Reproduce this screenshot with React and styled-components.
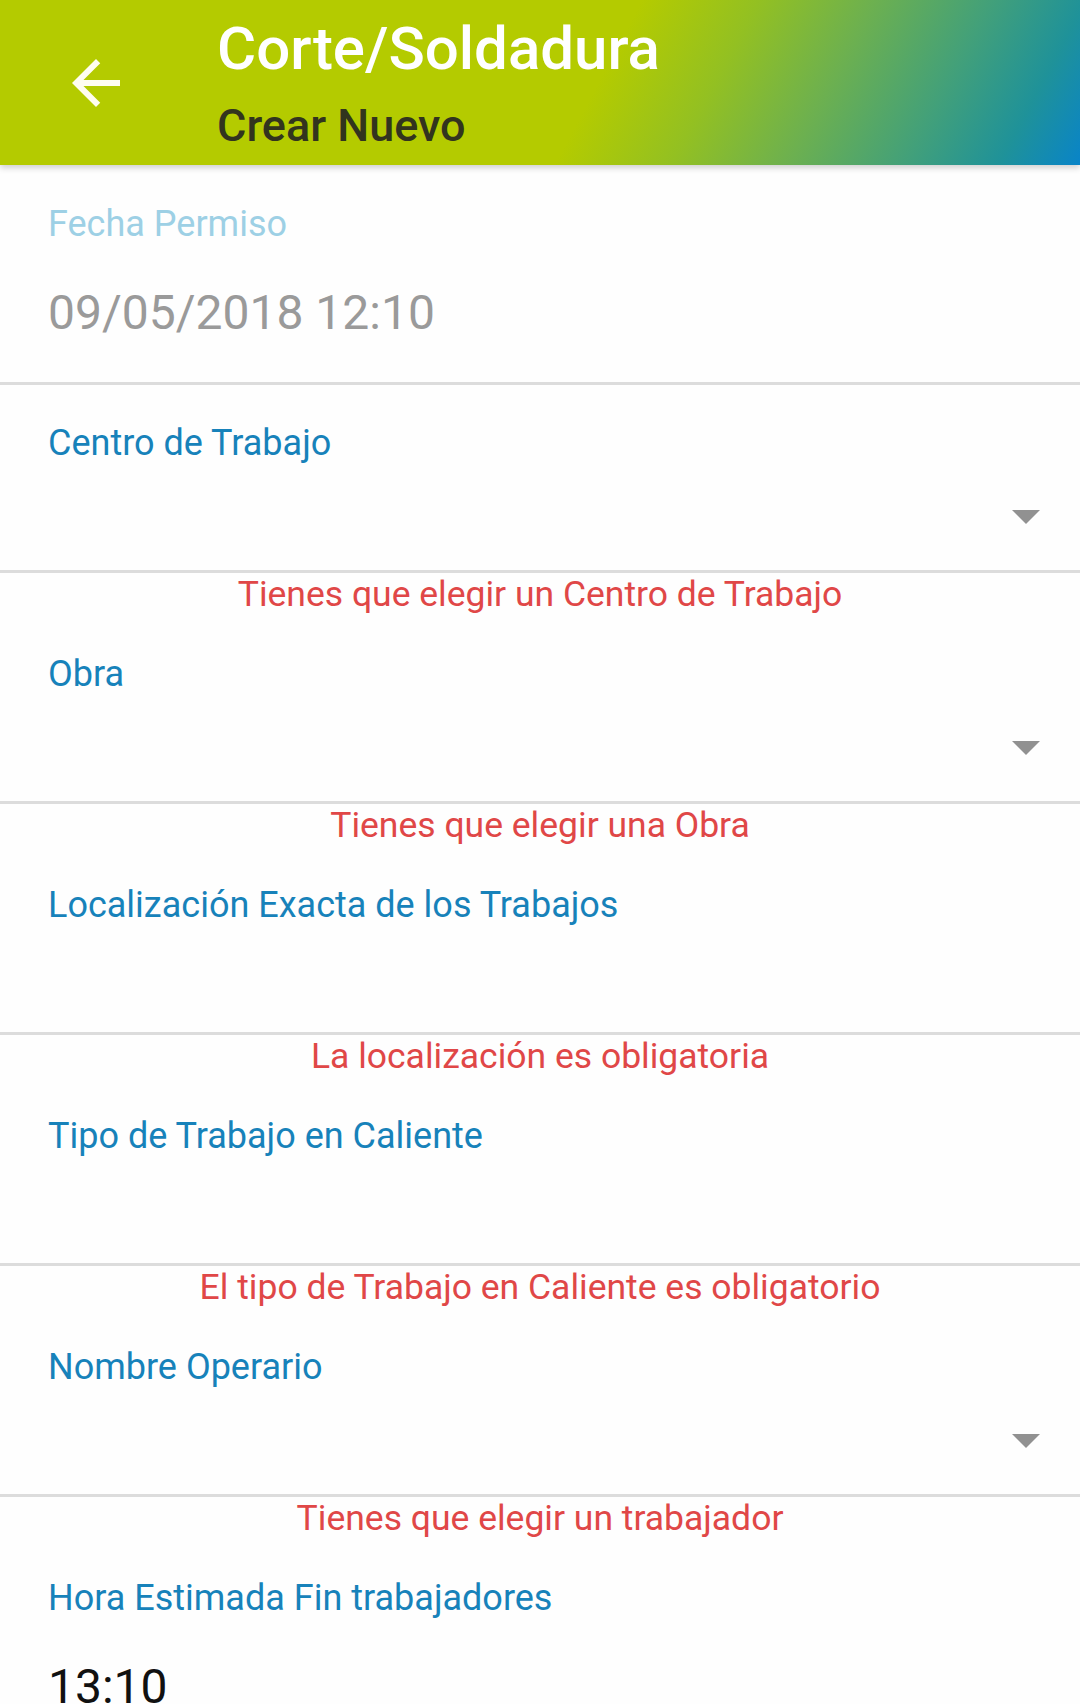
import React from "react";
import styled, { createGlobalStyle } from "styled-components";

const GlobalStyle = createGlobalStyle`
  html, body {
    margin: 0;
    padding: 0;
    background: #fefefe;
  }
  body {
    font-family: Roboto, "Liberation Sans", sans-serif;
  }
`;

const Page = styled.div`
  width: 1080px;
  min-height: 1704px;
  overflow: hidden;
  background: #fefefe;
`;

const Header = styled.header`
  position: relative;
  z-index: 2;
  height: 165px;
  display: flex;
  align-items: flex-start;
  background: linear-gradient(
    118deg,
    #b4cb00 0%,
    #b4cb00 55%,
    #93c022 65%,
    #6cb050 75%,
    #42a07a 85%,
    #1f9299 93%,
    #0984c8 100%
  );
  box-shadow: 0 3px 6px rgba(0, 0, 0, 0.18);
`;

const BackButton = styled.button`
  width: 72px;
  height: 72px;
  margin: 47px 0 0 60px;
  padding: 0;
  border: none;
  background: transparent;
  display: flex;
  align-items: center;
  justify-content: center;
  cursor: pointer;
`;

const Titles = styled.div`
  display: flex;
  flex-direction: column;
  margin-left: 85px;
  padding-top: 19px;
`;

const Title = styled.h1`
  margin: 0 0 24px;
  font-size: 60px;
  line-height: 60px;
  font-weight: 500;
  color: #ffffff;
`;

const Subtitle = styled.h2`
  margin: 0;
  font-size: 45px;
  line-height: 45px;
  font-weight: 500;
  color: #32341e;
`;

const Form = styled.main`
  display: flex;
  flex-direction: column;
`;

const Field = styled.section`
  display: flex;
  flex-direction: column;
  padding-top: ${(p) => (p.$first ? "39px" : "38px")};
`;

const Label = styled.label`
  padding-left: 48px;
  font-size: 36px;
  line-height: 41px;
  color: ${(p) => (p.$muted ? "#9dd0e5" : "#1782ba")};
`;

const Value = styled.div`
  margin-top: 40px;
  padding-left: 48px;
  padding-bottom: 41px;
  font-size: 48px;
  line-height: 56px;
  color: ${(p) => (p.$dim ? "#9a9a9a" : "#111111")};
`;

const SpinnerRow = styled.div`
  height: 106px;
  display: flex;
  align-items: center;
  justify-content: flex-end;
  padding-right: 40px;
`;

const Caret = styled.span`
  width: 0;
  height: 0;
  border-left: 14.5px solid transparent;
  border-right: 14.5px solid transparent;
  border-top: 14px solid #919191;
`;

const Divider = styled.hr`
  margin: 0;
  border: none;
  height: 3px;
  background: #dcdcdc;
`;

const ErrorText = styled.p`
  margin: 0;
  height: 43px;
  font-size: 35.5px;
  line-height: 43px;
  text-align: center;
  color: #e04747;
`;

function ArrowBack() {
  return (
    <svg width="72" height="72" viewBox="0 0 24 24" fill="#fffdf0">
      <path d="M20 11H7.83l5.59-5.59L12 4l-8 8 8 8 1.41-1.41L7.83 13H20v-2z" />
    </svg>
  );
}

const fields = [
  { label: "Centro de Trabajo", dropdown: true, error: "Tienes que elegir un Centro de Trabajo" },
  { label: "Obra", dropdown: true, error: "Tienes que elegir una Obra" },
  { label: "Localización Exacta de los Trabajos", error: "La localización es obligatoria" },
  { label: "Tipo de Trabajo en Caliente", error: "El tipo de Trabajo en Caliente es obligatorio" },
  { label: "Nombre Operario", dropdown: true, error: "Tienes que elegir un trabajador" },
];

export default function App() {
  return (
    <Page>
      <GlobalStyle />
      <Header>
        <BackButton aria-label="Volver">
          <ArrowBack />
        </BackButton>
        <Titles>
          <Title>Corte/Soldadura</Title>
          <Subtitle>Crear Nuevo</Subtitle>
        </Titles>
      </Header>

      <Form>
        <Field $first>
          <Label $muted>Fecha Permiso</Label>
          <Value $dim>09/05/2018 12:10</Value>
        </Field>
        <Divider />

        {fields.map((f) => (
          <React.Fragment key={f.label}>
            <Field>
              <Label>{f.label}</Label>
              <SpinnerRow>{f.dropdown && <Caret />}</SpinnerRow>
            </Field>
            <Divider />
            <ErrorText>{f.error}</ErrorText>
          </React.Fragment>
        ))}

        <Field>
          <Label>Hora Estimada Fin trabajadores</Label>
          <Value>13:10</Value>
        </Field>
      </Form>
    </Page>
  );
}
